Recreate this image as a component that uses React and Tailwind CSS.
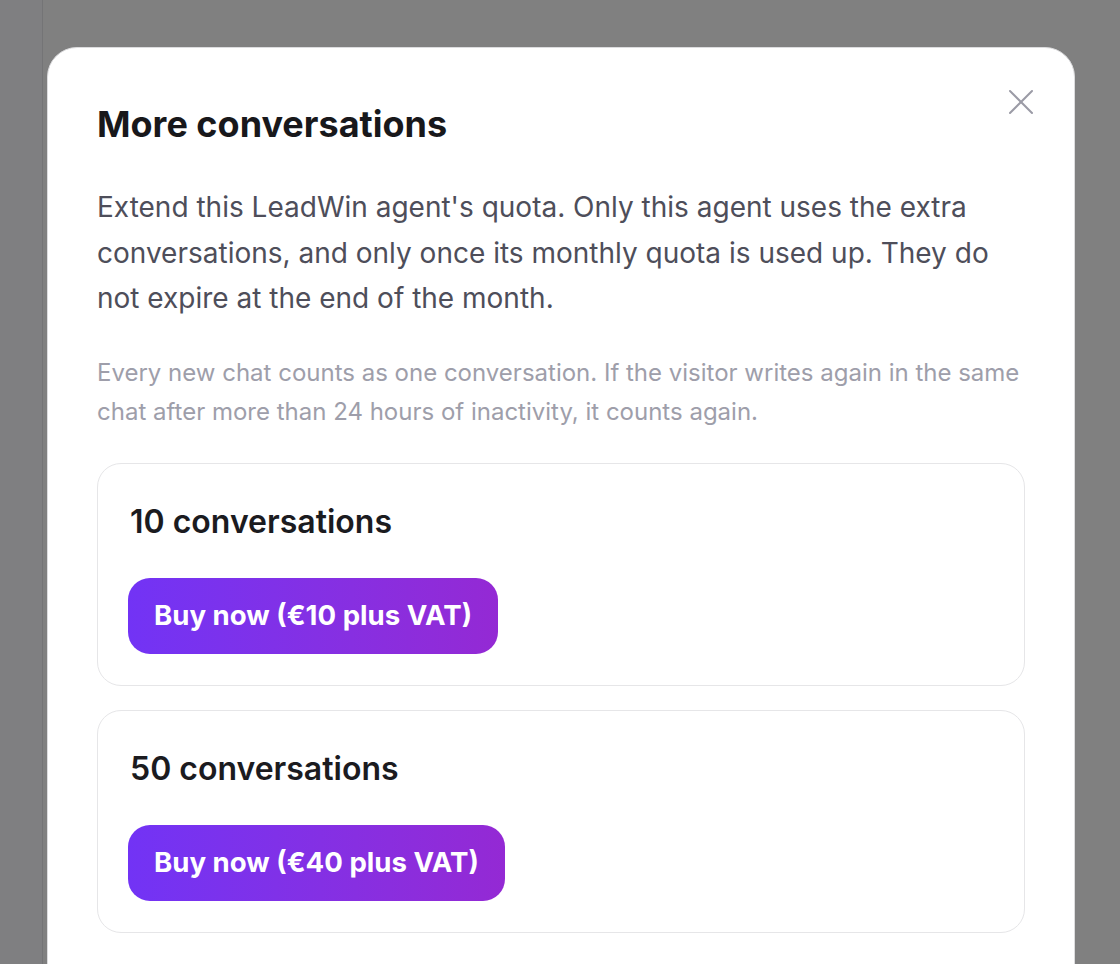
import React from "react";

const packs = [
  { count: 10, price: 10 },
  { count: 50, price: 40 },
];

function CloseIcon() {
  return (
    <svg width="26" height="26" viewBox="0 0 26 26" fill="none" stroke="#9b9ba6" strokeWidth="2" strokeLinecap="round">
      <path d="M2 2 L24 24" />
      <path d="M24 2 L2 24" />
    </svg>
  );
}

function PackCard({ count, price }) {
  return (
    <div className="rounded-[24px] border border-[#e6e6e8] bg-white pl-[30px] pt-[39px] pb-[31px]">
      <h3 className="pl-[2px] text-[32px] leading-[38px] font-semibold text-[#1b1b1f]">
        {count} conversations
      </h3>
      <button className="mt-[37px] h-[76px] rounded-[22px] bg-linear-to-r from-[#7233f5] to-[#9429d4] px-[26px] text-[27.6px] font-bold text-white">
        Buy now (€{price} plus VAT)
      </button>
    </div>
  );
}

export default function App() {
  return (
    <div className="relative h-[964px] w-full overflow-hidden bg-[#808080] font-['Inter',sans-serif]">
      {/* app shell behind the overlay */}
      <div className="h-full w-[43px] border-r border-[#747476] bg-[#7f7f81]" />

      {/* dialog */}
      <div className="absolute inset-0 flex pl-[47px] pt-[47px]">
        <div className="relative h-[1000px] w-[1028px] rounded-[30px] border border-[#dcdcde] bg-white px-[49px] pt-[54px]">
          <button className="absolute right-[40px] top-[41px]">
            <CloseIcon />
          </button>
          <h2 className="text-[36px] leading-[44px] font-bold text-[#18181b]">
            More conversations
          </h2>
          <p className="mt-[39px] text-[28px] leading-[45.5px] text-[#4e4e5a]">
            Extend this LeadWin agent's quota. Only this agent uses the extra conversations, and only once its monthly quota is used up. They do not expire at the end of the month.
          </p>
          <p className="mt-[31px] text-[24px] leading-[39px] text-[#9e9eaa]">
            Every new chat counts as one conversation. If the visitor writes again in the same chat after more than 24 hours of inactivity, it counts again.
          </p>
          <div className="mt-[32px] flex flex-col gap-[24px]">
            {packs.map((p) => (
              <PackCard key={p.count} {...p} />
            ))}
          </div>
        </div>
      </div>
    </div>
  );
}
